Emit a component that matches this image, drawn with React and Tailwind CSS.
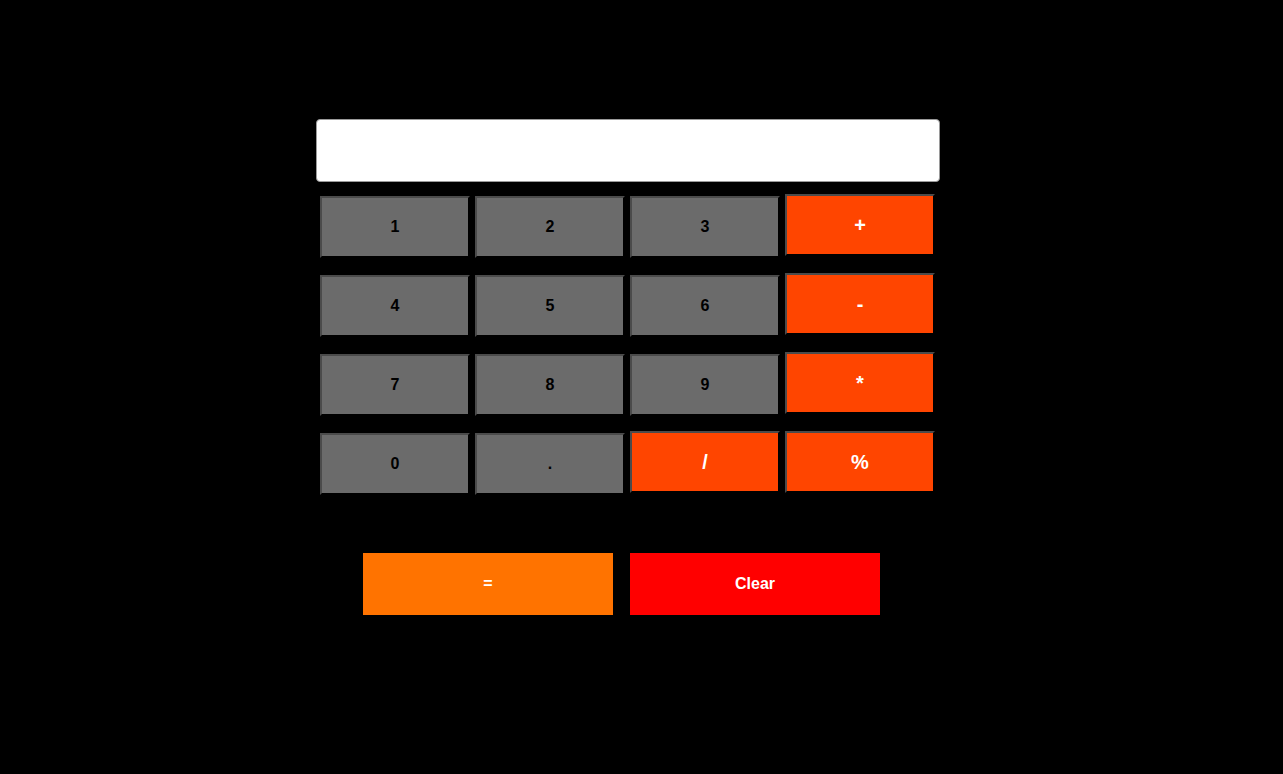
const rows = [
  [{ k: '1' }, { k: '2' }, { k: '3' }, { k: '+', op: true }],
  [{ k: '4' }, { k: '5' }, { k: '6' }, { k: '-', op: true }],
  [{ k: '7' }, { k: '8' }, { k: '9' }, { k: '*', op: true }],
  [{ k: '0' }, { k: '.' }, { k: '/', op: true }, { k: '%', op: true }],
];

function Key({ k, op }) {
  const base =
    'w-[150px] h-[62px] border-2 border-t-[#4b4b4b] border-l-[#4b4b4b] border-r-black border-b-black font-bold flex items-center justify-center';
  if (op) {
    return <button className={`${base} bg-[#ff4500] text-white text-[20px]`}>{k}</button>;
  }
  return <button className={`${base} mt-[2px] bg-[#6b6b6b] text-black text-[16px]`}>{k}</button>;
}

export default function App() {
  return (
    <div className="w-full min-h-[774px] bg-black font-['Liberation_Sans',Arial,sans-serif]">
      <div className="w-[651px] mx-auto pt-[119px] flex flex-col">
        <input
          type="text"
          className="w-[624px] h-[63px] bg-white rounded-[4px] border border-[#9a9a9a] outline-none"
        />
        <div className="mt-[12px] pl-[4px] flex flex-col gap-[15px]">
          {rows.map((row, i) => (
            <div key={i} className="flex items-start gap-[5px]">
              {row.map((b) => (
                <Key key={b.k} {...b} />
              ))}
            </div>
          ))}
        </div>
        <div className="mt-[58px] pl-[47px] flex gap-[17px]">
          <button className="w-[250px] h-[62px] bg-[#ff7300] text-white font-bold text-[16px]">=</button>
          <button className="w-[250px] h-[62px] bg-[#ff0000] text-white font-bold text-[16px]">Clear</button>
        </div>
      </div>
    </div>
  );
}
